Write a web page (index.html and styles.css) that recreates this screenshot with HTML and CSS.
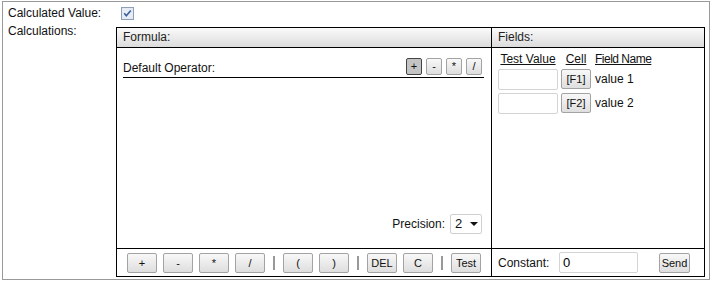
FILE: index.html
```html
<!DOCTYPE html>
<html lang="en">
<head>
    <meta charset="UTF-8">
    <title>Calculated Value</title>
    <link rel="stylesheet" href="styles.css">
</head>
<body>
    <div class="panel">
        <div class="row">
            <div class="label">Calculated Value:</div>
            <div class="value">
                <span class="check">
                    <svg width="13" height="13" viewBox="0 0 13 13">
                        <rect x="0.5" y="0.5" width="12" height="12" fill="#dfe6f0" stroke="#8e9fb8"/>
                        <rect x="1.5" y="1.5" width="10" height="10" fill="#e8edf5"/>
                        <path d="M3.2 6.3 L5.3 8.8 L9.8 3.4" fill="none" stroke="#3d5f9e" stroke-width="1.6"/>
                    </svg>
                </span>
            </div>
        </div>
        <div class="row">
            <div class="label">Calculations:</div>
            <div class="calc">
                <div class="head head-left">Formula:</div>
                <div class="head">Fields:</div>

                <div class="formula">
                    <div class="operator">
                        <span>Default Operator:</span>
                        <div class="op-buttons">
                            <button class="op active">+</button>
                            <button class="op">-</button>
                            <button class="op">*</button>
                            <button class="op">/</button>
                        </div>
                    </div>
                    <div class="formula-area"></div>
                    <div class="precision">
                        <span>Precision:</span>
                        <div class="select">2 <span class="arrow"></span></div>
                    </div>
                </div>

                <div class="fields">
                    <div class="fields-grid">
                        <span class="fh center">Test Value</span>
                        <span class="fh center">Cell</span>
                        <span class="fh name">Field Name</span>

                        <input class="test" type="text">
                        <button class="cell">[F1]</button>
                        <span class="fname">value 1</span>

                        <input class="test" type="text">
                        <button class="cell">[F2]</button>
                        <span class="fname">value 2</span>
                    </div>
                </div>

                <div class="foot foot-left">
                    <button class="key">+</button>
                    <button class="key">-</button>
                    <button class="key">*</button>
                    <button class="key">/</button>
                    <span class="sep"></span>
                    <button class="key">(</button>
                    <button class="key">)</button>
                    <span class="sep"></span>
                    <button class="key">DEL</button>
                    <button class="key">C</button>
                    <span class="sep"></span>
                    <button class="key">Test</button>
                </div>
                <div class="foot foot-right">
                    <span class="const-label">Constant:</span>
                    <input class="constant" type="text" value="0">
                    <button class="send">Send</button>
                </div>
            </div>
        </div>
    </div>
</body>
</html>
```

FILE: styles.css
```css
body {
    margin: 0;
    padding: 1px 2px;
    background-color: #fff;
    font-family: 'Liberation Sans', Arial, sans-serif;
    font-size: 12px;
    color: #111;
}
.panel {
    width: 706px;
    height: 277px;
    border: 1px solid #999;
}
.row {
    display: flex;
}
.label {
    width: 108px;
    padding-left: 5px;
    line-height: 18px;
    flex-shrink: 0;
}
.row:first-child .label {
    padding-top: 2px;
}
.check {
    display: block;
    margin: 5px 0 0 5px;
    height: 13px;
}
.check svg {
    display: block;
}
.calc {
    margin-top: 5px;
    display: grid;
    grid-template-columns: 375px 212px;
    grid-template-rows: 20px 201px 27px;
    border: 1px solid #000;
}
.head {
    border-bottom: 1px solid #000;
    background: linear-gradient(#fafafa, #dcdcdc);
    padding-left: 6px;
    line-height: 18px;
    color: #222;
}
.head-left,
.formula,
.foot-left {
    border-right: 1px solid #000;
}
.formula,
.fields {
    border-bottom: 1px solid #000;
}
.formula {
    display: flex;
    flex-direction: column;
    padding: 10px 7px 0 6px;
}
.operator {
    display: flex;
    align-items: flex-end;
    justify-content: space-between;
    border-bottom: 1px solid #000;
    padding-bottom: 2px;
}
.operator span {
    line-height: 14px;
}
.op-buttons {
    display: flex;
    gap: 4px;
    padding-right: 2px;
}
button {
    font-family: 'Liberation Sans', Arial, sans-serif;
    color: #111;
    border: 1px solid #a3a3a3;
    background: linear-gradient(#f8f8f8, #dedede);
    padding: 0;
    margin: 0;
    border-radius: 2px;
}
.op {
    width: 16px;
    height: 17px;
    font-size: 11px;
    line-height: 15px;
}
.op.active {
    background: #c4c4c4;
    border-color: #444;
}
.formula-area {
    flex: 1;
}
.precision {
    display: flex;
    justify-content: flex-end;
    align-items: center;
    gap: 5px;
    margin: 0 2px 14px 0;
}
.select {
    width: 32px;
    height: 20px;
    border: 1px solid #d0d0d0;
    border-radius: 2px;
    box-sizing: border-box;
    padding-left: 4px;
    line-height: 18px;
    font-size: 13px;
    display: flex;
    align-items: center;
    gap: 8px;
}
.arrow {
    width: 0;
    height: 0;
    border-left: 4px solid transparent;
    border-right: 4px solid transparent;
    border-top: 4px solid #111;
}
.fields {
    padding: 5px 0 0 6px;
}
.fields-grid {
    display: grid;
    grid-template-columns: 60px 30px auto;
    column-gap: 3px;
    row-gap: 3px;
    align-items: start;
    justify-content: start;
}
.fh {
    text-decoration: underline;
    line-height: 13px;
}
.fh.center {
    text-align: center;
}
.fh.name {
    padding-left: 1px;
    letter-spacing: -0.5px;
}
.test,
.constant {
    box-sizing: border-box;
    height: 21px;
    border: 1px solid #d4d4d4;
    border-radius: 2px;
    margin: 0;
    padding: 0 4px;
    font-family: 'Liberation Sans', Arial, sans-serif;
    font-size: 13px;
}
.test {
    width: 60px;
}
.cell {
    width: 30px;
    height: 20px;
    font-size: 11px;
}
.fname {
    line-height: 20px;
    padding-left: 1px;
}
.foot {
    display: flex;
    align-items: center;
}
.foot-left {
    padding-left: 10px;
    gap: 6px;
}
.key {
    width: 30px;
    height: 20px;
    font-size: 11px;
}
.sep {
    width: 6px;
    height: 14px;
    background: linear-gradient(to right, transparent 2px, #999 2px, #999 4px, transparent 4px);
}
.foot-right {
    padding-left: 6px;
}
.const-label {
    width: 61px;
}
.constant {
    width: 79px;
    padding-left: 3px;
}
.send {
    margin-left: 21px;
    width: 31px;
    height: 20px;
    font-size: 11px;
}
```
